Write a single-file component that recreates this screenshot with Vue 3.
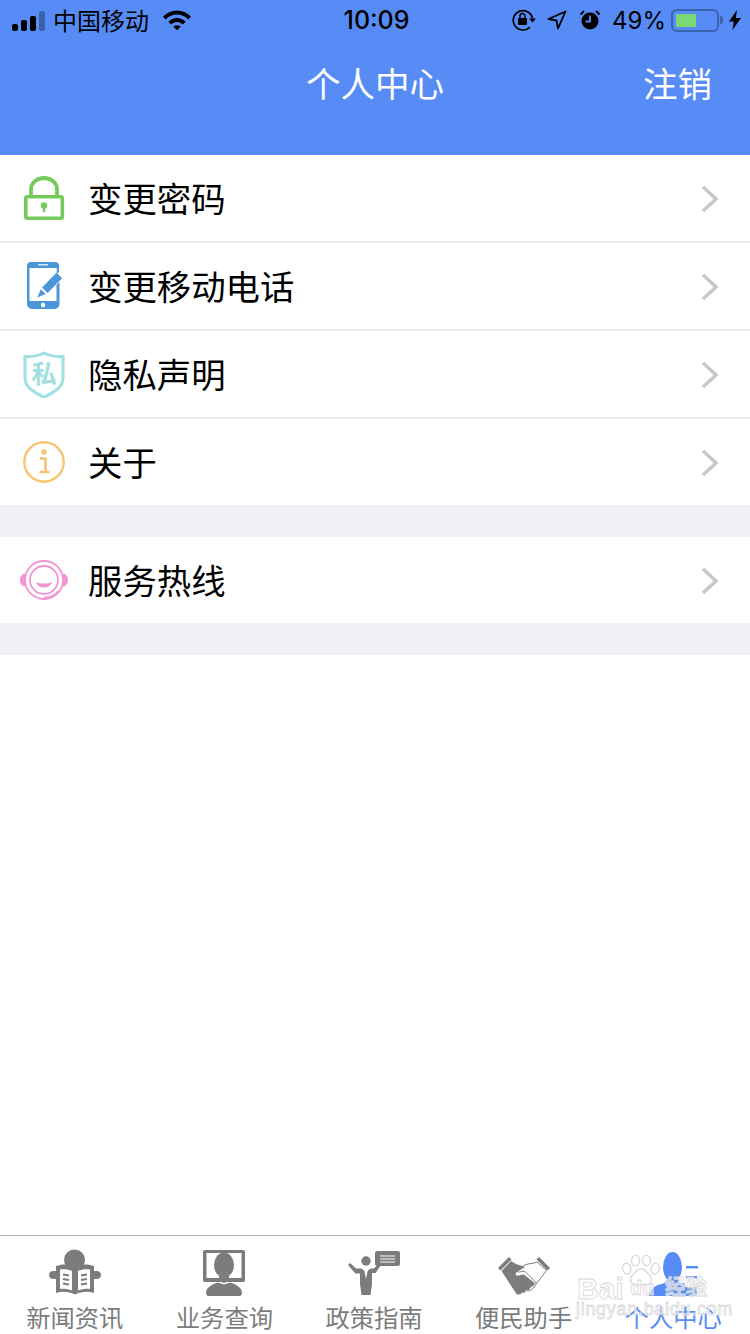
<script setup>
const groups = [
  [
    { icon: 'lock', label: '变更密码' },
    { icon: 'phone', label: '变更移动电话' },
    { icon: 'shield', label: '隐私声明' },
    { icon: 'info', label: '关于' },
  ],
  [{ icon: 'headset', label: '服务热线' }],
]

const tabs = [
  { icon: 'news', label: '新闻资讯' },
  { icon: 'query', label: '业务查询' },
  { icon: 'policy', label: '政策指南' },
  { icon: 'help', label: '便民助手' },
  { icon: 'me', label: '个人中心', active: true },
]
</script>

<template>
  <div class="page">
    <header class="header">
      <div class="status">
        <div class="status__side">
          <svg class="signal" width="34" height="20" viewBox="0 0 34 20">
            <rect x="0" y="13" width="6" height="7" rx="2" />
            <rect x="9" y="9" width="6" height="11" rx="2" />
            <rect x="18" y="5" width="6" height="15" rx="2" />
            <rect x="27" y="0" width="6" height="20" rx="2" opacity="0.3" />
          </svg>
          <span class="carrier">中国移动</span>
          <svg class="wifi" width="28" height="20" viewBox="0 0 28 20">
            <path d="M0 6.500C8-1.500 20-1.500 28 6.500l-2.600 2.900C18.800 3 9.200 3 2.600 9.400Z" />
            <path d="M5.300 11.800C10.500 6.800 17.500 6.800 22.700 11.800l-2.700 2.800C16.300 11.200 11.700 11.200 8 14.600Z" />
            <path d="M10.200 16.600c2.400-1.900 5.200-1.900 7.600 0L14 20.400Z" />
          </svg>
        </div>
        <span class="time">10:09</span>
        <div class="status__side status__side--right">
          <svg width="24" height="22" viewBox="0 0 24 22" fill="none" stroke="#000">
            <path d="M20.500 9.500A9.700 9.700 0 1 0 18 18" stroke-width="1.700" />
            <path d="M17 9.500h7l-3.500 4Z" fill="#000" stroke="none" />
            <rect x="6" y="9" width="9" height="7" rx="1" fill="#000" stroke="none" />
            <path d="M8 9V7a2.500 2.500 0 0 1 5 0v2" stroke-width="1.500" />
          </svg>
          <svg class="gap-loc" width="20" height="20" viewBox="0 0 20 20" fill="none" stroke="#000" stroke-width="1.800">
            <path d="M18.500 1.500 1.500 9l8 1.500 1.500 8Z" stroke-linejoin="round" />
          </svg>
          <svg class="gap-alarm" width="20" height="20" viewBox="0 0 20 20">
            <circle cx="10" cy="11" r="8.500" />
            <path d="M10 5.500V11.500H5.500" fill="none" stroke="#578cf7" stroke-width="1.800" />
            <path d="M0.500 4.500 4 1M19.500 4.500 16 1" stroke="#000" stroke-width="2" />
          </svg>
          <span class="percent">49%</span>
          <div class="battery"><div class="battery__fill"></div></div>
          <span class="battery__tip"></span>
          <svg class="bolt" width="12" height="20" viewBox="0 0 12 20">
            <path d="M8 0 0 11.500h4.800L3.500 20 12 8H6.800Z" />
          </svg>
        </div>
      </div>
      <div class="nav">
        <h1 class="nav__title">个人中心</h1>
        <span class="nav__action">注销</span>
      </div>
    </header>

    <main class="main">
      <section v-for="(group, i) in groups" :key="i" class="group">
        <div v-for="row in group" :key="row.label" class="row">
          <span class="row__icon">
            <svg v-if="row.icon === 'lock'" width="48" height="48" viewBox="0 -2 48 48" fill="none">
              <path d="M11 22v-9a13 11 0 0 1 26 0v9" stroke="#74cb5c" stroke-width="3.800" />
              <rect x="5.800" y="20.800" width="36.500" height="21.500" rx="1.500" stroke="#74cb5c" stroke-width="3.600" />
              <circle cx="24" cy="29.500" r="3.200" fill="#74cb5c" />
              <rect x="22.800" y="30.500" width="2.400" height="6" rx="1.200" fill="#74cb5c" />
            </svg>
            <svg v-else-if="row.icon === 'phone'" width="48" height="48" viewBox="0 0 48 48">
              <path d="M11 0h24a4 4 0 0 1 4 4v6L36.800 12V6H9.500v33h27V23L39.500 20V42a5 5 0 0 1-5 5H12a5 5 0 0 1-5-5V4a4 4 0 0 1 4-4Z" fill="#4b96d9" />
              <rect x="18" y="2" width="10" height="1.600" rx="0.800" fill="#d6e8f7" />
              <circle cx="23" cy="43" r="2.200" fill="#fff" />
              <path d="M36.500 10.800l5.600 5.400L27.600 31l-5.600-5.400ZM20.800 27.200l4.800 4.800-8.300 3.400Z" fill="#4b96d9" />
            </svg>
            <svg v-else-if="row.icon === 'shield'" width="48" height="48" viewBox="0 -1.500 48 48" fill="none">
              <path d="M24 1.500C17 5 11 5.500 5 5v22c0 9 10 14 19 19 9-5 19-10 19-19V5c-6 .5-12 0-19-3.500Z" stroke="#9fe0e0" stroke-width="3" />
              <text x="24" y="31" text-anchor="middle" class="shield-text">私</text>
            </svg>
            <svg v-else-if="row.icon === 'info'" width="48" height="48" viewBox="0 0 48 48" fill="none">
              <circle cx="24" cy="24" r="19.700" stroke="#f6c470" stroke-width="2.400" />
              <circle cx="24" cy="14" r="2.700" fill="#f6c470" />
              <path d="M20 20.500h5.500v13M19.500 34h10" stroke="#f6c470" stroke-width="2.600" />
            </svg>
            <svg v-else width="48" height="48" viewBox="0 -2 48 48" fill="none">
              <circle cx="24" cy="22" r="19" stroke="#f294d3" stroke-width="1.800" />
              <circle cx="24" cy="22" r="14" stroke="#f294d3" stroke-width="1.800" />
              <path d="M0 22c0-3.500 2-6 5.500-6.500v13C2 28 0 25.500 0 22ZM48 22c0-3.500-2-6-5.500-6.500v13C46 28 48 25.500 48 22Z" fill="#f294d3" />
              <path d="M16 24c5 2 11 2 16 0-1 3.600-4 5.500-8 5.500s-7-1.900-8-5.500Z" fill="#f294d3" />
              <path d="M38 33c-2.500 4-6 6-11.500 6.800" stroke="#f294d3" stroke-width="1.600" />
              <ellipse cx="26" cy="40" rx="2.300" ry="1.800" fill="#f294d3" />
            </svg>
          </span>
          <span class="row__label">{{ row.label }}</span>
          <svg class="row__arrow" width="18" height="28" viewBox="0 0 18 28" fill="none">
            <path d="M2 2 15 14 2 26" stroke="#c7c7cc" stroke-width="3.600" />
          </svg>
        </div>
      </section>
    </main>

    <footer class="tabbar">
      <div v-for="tab in tabs" :key="tab.label" class="tab" :class="{ 'tab--active': tab.active }">
        <svg v-if="tab.icon === 'news'" width="52" height="48" viewBox="0 0 52 48" class="tab__icon">
          <circle cx="25.500" cy="11" r="10.500" />
          <path d="M7 17c6-2.500 13-2 19 1 6-3 13-3.500 19-1v5h2.500a4 4 0 0 1 4.500 4 4 4 0 0 1-4.500 4H45v14c-6-2-13-1.500-19 1.500-6-3-13-3.500-19-1.500V30H4.500A4 4 0 0 1 0 26a4 4 0 0 1 4.500-4H7Z" />
          <path d="M11 20.500c3.700-.7 8-.4 12 1.300v19.700c-4-1.600-8.300-2-12-1.500ZM29 21.800c4-1.700 8.300-2 12-1.300v19.500c-3.700-.5-8 0-12 1.500Z" fill="#fff" />
          <path d="M14 25.500l6 1M14 30l6 1M14 34.500l6 1M38 25.500l-6 1M38 30l-6 1M38 34.500l-6 1" stroke="#7b7c7e" stroke-width="2.200" />
        </svg>
        <svg v-else-if="tab.icon === 'query'" width="52" height="48" viewBox="0 0 52 48" class="tab__icon">
          <path d="M7 1h38a2 2 0 0 1 2 2v28a2 2 0 0 1-2 2H7a2 2 0 0 1-2-2V3a2 2 0 0 1 2-2Zm1.500 3v25h35V4Z" />
          <ellipse cx="26" cy="16" rx="10" ry="12.500" />
          <path d="M21 27h10v5l-5 2-5-2Z" />
          <path d="M20 33.500l6 2 6-2c7 2 12 5.500 12 10.500 0 2-1 3-3 3H11c-2 0-3-1-3-3 0-5 5-8.500 12-10.500Z" />
        </svg>
        <svg v-else-if="tab.icon === 'policy'" width="52" height="48" viewBox="0 0 52 48" class="tab__icon">
          <rect x="27" y="2" width="25" height="15" rx="2" />
          <path d="M32 7h15M32 10h15M32 13h15" stroke="#fff" stroke-width="1" />
          <circle cx="18" cy="12" r="4.700" />
          <path d="M0 16 2 14 8 19.500h5.500L18 23l4.500-3.500H26L32 13l2 1.800-6.500 9.200H24V35l-1.500 11h-9L12 35V24.500H7.500Z" />
          <path d="M18 19l-1.800 2 1.800 9 1.800-9Z" fill="#fff" />
        </svg>
        <svg v-else-if="tab.icon === 'help'" width="52" height="48" viewBox="0 0 52 48" class="tab__icon">
          <path d="M0 19 11 8l2.500 2.500-11 11Z" />
          <path d="M52 19 41 8l-2.500 2.500 11 11Z" />
          <path d="M39 13l9.500 8.500L34 40.500c-2 1.500-3.500 1.500-5 1l9-8-11-11c-3-1-5 1-7 .5-1.500-.5-.5-2.500 1-3.500L27 16c4-2 8-1 12-3Z" fill="#fff" stroke="#7b7c7e" stroke-width="1" />
          <path d="M3.500 22 13 12l5 3 9 3-8 5c-1.500 1-2 3 0 3.500 2 .5 5-1.500 7-1l10 8c1 2.500-1.500 4.500-3.500 3.500 .5 2.500-2 4.500-4 3.500 0 2.500-2.500 4-4.500 3-1.500 2.500-4 2.500-5.500 1.500Z" />
        </svg>
        <svg v-else width="52" height="48" viewBox="0 0 52 48" class="tab__icon">
          <ellipse cx="25.500" cy="18" rx="9.500" ry="15" />
          <path d="M20 31h11l3 3h4v4H50v9H2c1-7 6-11 13-12l4-2Z" />
          <rect x="39" y="17" width="12" height="2.400" />
          <rect x="39" y="27" width="11" height="2.400" />
        </svg>
        <span class="tab__label">{{ tab.label }}</span>
      </div>

      <div class="watermark">
        <svg class="watermark__paw" width="42" height="38" viewBox="0 0 62 50" fill="rgba(255,255,255,0.55)" stroke="#d8d8d8" stroke-width="2">
          <ellipse cx="10" cy="20" rx="6" ry="8" transform="rotate(-15 10 20)" />
          <ellipse cx="23" cy="8" rx="6" ry="7.500" />
          <ellipse cx="39" cy="8" rx="6" ry="7.500" />
          <ellipse cx="52" cy="20" rx="6" ry="8" transform="rotate(15 52 20)" />
          <path d="M31 20c5 0 7 4 11 8 5 4 6 8 3 13-3 5-9 3-14 3s-11 2-14-3c-3-5-2-9 3-13 4-4 6-8 11-8Z" />
        </svg>
        <span class="watermark__bai">Bai</span>
        <span class="watermark__du">du</span>
        <span class="watermark__jy">经验</span>
        <span class="watermark__url">jingyan.baidu.com</span>
      </div>
    </footer>
  </div>
</template>

<style>
html,
body {
  margin: 0;
  background: #fff;
}
</style>

<style scoped>
.page {
  width: 750px;
  height: 1334px;
  display: flex;
  flex-direction: column;
  overflow: hidden;
  background: #fff;
  font-family: "Liberation Sans", "Noto Sans CJK SC", sans-serif;
}
.header {
  height: 155px;
  background: #578cf7;
  flex-shrink: 0;
}
.status {
  height: 40px;
  padding: 0 9px 0 12px;
  display: grid;
  grid-template-columns: 1fr auto 1fr;
  align-items: center;
  color: #000;
  font-size: 24px;
}
.status__side {
  display: flex;
  align-items: center;
}
.status__side--right {
  justify-content: flex-end;
}
.signal {
  margin-top: 1px;
}
.carrier {
  margin-left: 7px;
  font-family: "Noto Sans CJK SC", sans-serif;
  line-height: 40px;
}
.wifi {
  margin-left: 14px;
}
.time {
  font-family: Inter, "Liberation Sans", sans-serif;
  font-size: 25px;
  font-weight: 500;
}
.gap-loc {
  margin-left: 11px;
}
.gap-alarm {
  margin-left: 13px;
}
.percent {
  margin-left: 12px;
  font-family: Inter, "Liberation Sans", sans-serif;
  font-size: 24px;
}
.battery {
  box-sizing: border-box;
  width: 48px;
  height: 23px;
  margin-left: 5px;
  padding: 3px;
  border: 2px solid #3a62ad;
  border-radius: 6px;
}
.battery__fill {
  width: 20px;
  height: 100%;
  background: #7ad975;
}
.battery__tip {
  width: 3px;
  height: 8px;
  margin-left: 1px;
  background: #3a62ad;
  border-radius: 0 3px 3px 0;
}
.bolt {
  margin-left: 6px;
}
.nav {
  position: relative;
  height: 84px;
  display: flex;
  align-items: center;
  justify-content: center;
}
.nav__title {
  margin: 0;
  font-size: 34.500px;
  font-weight: 400;
  color: #fff;
  font-family: "Noto Sans CJK SC", sans-serif;
}
.nav__action {
  position: absolute;
  right: 38px;
  font-size: 34.500px;
  color: #fff;
  font-family: "Noto Sans CJK SC", sans-serif;
}
.main {
  flex: 1;
}
.group {
  border-bottom: 32px solid #efeff4;
}
.row {
  box-sizing: border-box;
  height: 88px;
  padding: 0 31px 0 20px;
  display: flex;
  align-items: center;
  border-bottom: 2px solid #ececf0;
}
.row:last-child {
  height: 86px;
  border-bottom: 0;
}
.row__icon {
  width: 48px;
  height: 48px;
  margin-right: 20px;
}
.row__label {
  flex: 1;
  margin-bottom: 3px;
  font-size: 34.400px;
  color: #000;
  font-family: "Noto Sans CJK SC", sans-serif;
}
.row__arrow {
  margin-top: 2px;
}
.shield-text {
  font-family: "Noto Sans CJK SC", sans-serif;
  font-size: 25px;
  font-weight: 700;
  fill: #9fe0e0;
}
.tabbar {
  position: relative;
  box-sizing: border-box;
  height: 99px;
  padding-right: 2px;
  display: flex;
  justify-content: center;
  border-top: 1px solid #b2b2b2;
  flex-shrink: 0;
}
.tab {
  width: 150px;
  padding-top: 13px;
  display: flex;
  flex-direction: column;
  align-items: center;
  color: #7b7c7e;
}
.tab__icon {
  fill: #7b7c7e;
}
.tab__label {
  margin-top: 5px;
  font-size: 24.300px;
  line-height: 30px;
  font-family: "Noto Sans CJK SC", sans-serif;
}
.tab--active {
  color: #578cf7;
}
.tab--active .tab__icon {
  fill: #578cf7;
}
.watermark {
  position: absolute;
  left: 575px;
  top: 14px;
  width: 140px;
  height: 84px;
  color: rgba(255, 255, 255, 0.65);
  -webkit-text-stroke: 0.8px #d8d8d8;
  font-family: "Liberation Sans", sans-serif;
}
.watermark__paw {
  position: absolute;
  left: 45px;
  top: 3px;
}
.watermark__bai {
  position: absolute;
  left: 2px;
  top: 22px;
  font-size: 30px;
  font-weight: 700;
}
.watermark__du {
  position: absolute;
  left: 55px;
  top: 27px;
  font-size: 20px;
  font-weight: 700;
}
.watermark__jy {
  position: absolute;
  left: 90px;
  top: 20px;
  font-size: 21px;
  font-weight: 700;
  font-family: "Noto Sans CJK SC", sans-serif;
}
.watermark__url {
  position: absolute;
  left: 1px;
  top: 49px;
  font-size: 18px;
  letter-spacing: 0.7px;
  white-space: nowrap;
}
</style>
